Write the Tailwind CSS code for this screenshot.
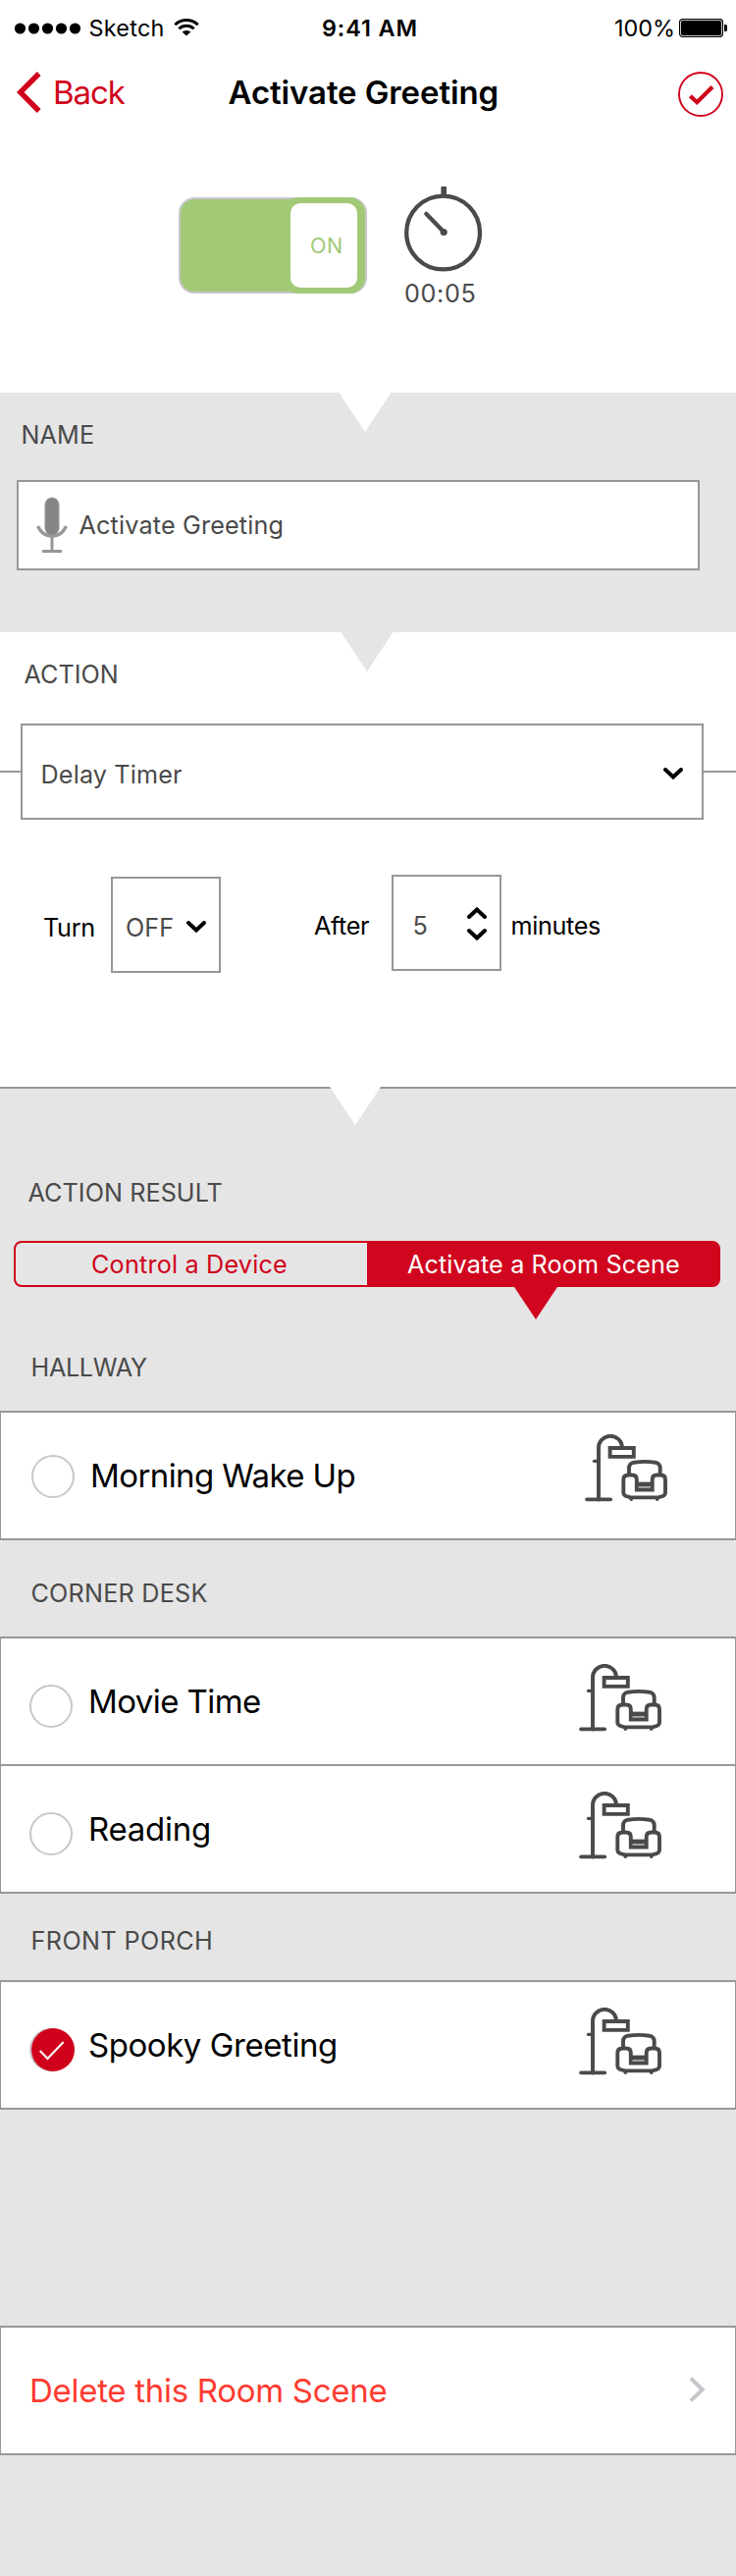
<!DOCTYPE html>
<html lang="en">
<head>
<meta charset="utf-8">
<title>Activate Greeting</title>
<script src="https://cdn.jsdelivr.net/npm/@tailwindcss/browser@4"></script>
</head>
<body class="w-[750px] h-[2624px] bg-white font-['Inter',sans-serif] text-black whitespace-nowrap overflow-x-hidden">

<svg class="hidden">
  <symbol id="lounge" viewBox="0 0 86 70">
    <g fill="none" stroke="#4a4a4a" stroke-width="3.9" stroke-linecap="round">
      <path d="M14 66.500V14A12 11.700 0 0 1 38 13"/>
      <path d="M25.600 14H49.800V22.900H25.600Z"/>
      <path d="M9.500 27.300H14" stroke-width="3.300"/>
      <path d="M2 66.300H26.200" stroke-width="3.700"/>
      <path stroke-linecap="butt" d="M45 42V34.500Q45 29.800 50 28.700Q61 27 71.700 28.700Q76.700 29.800 76.700 34.500V42"/>
      <path d="M52.800 56.500V46Q52.800 41.500 48 41.500H44.500Q39.300 41.500 39.300 46V59.500Q39.300 61.700 42 63L46.500 64.400H75L79.300 63Q82 61.700 82 59.500V46Q82 41.500 77 41.500H73.500Q68.700 41.500 68.700 46V56.500Z" stroke-linejoin="miter"/>
      <path d="M53 50.900H68.500" stroke-width="4.600" stroke-linecap="butt"/>
      <path d="M47.300 66V66.200M73.700 66V66.200" stroke-width="3.600"/>
    </g>
    <path d="M54.500 54H67" stroke="#8c8c8c" stroke-width="1.200"/>
  </symbol>
  <symbol id="down" viewBox="0 0 20 12">
    <path d="M2 2L10 9.500L18 2" fill="none" stroke="#000" stroke-width="4" stroke-linecap="round"/>
  </symbol>
</svg>

<!-- Status bar -->
<header>
  <div class="relative flex h-[57px] items-center text-[23.4px]">
    <svg class="ml-[14px] h-[12px] w-[70px]" viewBox="0 0 70 12"><circle cx="6.500" cy="6" r="5.600"/><circle cx="20.500" cy="6" r="5.600"/><circle cx="34.500" cy="6" r="5.600"/><circle cx="48.500" cy="6" r="5.600"/><circle cx="62.500" cy="6" r="5.600"/></svg>
    <span class="ml-[6.5px] w-[86px] tracking-[0.25px]">Sketch</span>
    <svg class="-mt-px h-[18px] w-[26px]" viewBox="0 0 26 18" fill="none" stroke="#000" stroke-width="2.900"><path d="M1.300 6.200A17 17 0 0 1 24.700 6.200"/><path d="M5.300 10.300A11.300 11.300 0 0 1 20.700 10.300"/><path d="M13 17.500L8.600 13.600A6.500 6.500 0 0 1 17.400 13.600Z" fill="#000" stroke="none"/></svg>
    <span class="ml-[125.500px] w-[298px] font-semibold tracking-[0.91px]">9:41 AM</span>
    <span>100%</span>
    <svg class="absolute left-[692px] top-[19px] h-[19px] w-[50px]" viewBox="0 0 50 19"><rect x=".6" y=".6" width="43.800" height="17.800" rx="2.800" fill="none" stroke="#000" stroke-width="1.200"/><rect x="2" y="2" width="41" height="15" rx="1.500"/><path d="M46 6h1.500q1.500 0 1.500 1.500v4q0 1.500-1.500 1.500H46z"/></svg>
  </div>
  <div class="flex h-[74px] items-center text-[33px]">
    <svg class="ml-[17px] h-[42px] w-[26px]" viewBox="0 0 26 42"><path d="M22.700 2L3.700 21L22.700 40" fill="none" stroke="#d0021b" stroke-width="5.400"/></svg>
    <span class="ml-[11px] w-[178.500px] pt-[2px] tracking-[-1.100px] text-[#d0021b]">Back</span>
    <h1 class="w-[458.500px] pt-[2px] font-semibold tracking-[-0.110px]">Activate Greeting</h1>
    <svg class="mt-[4px] h-[46px] w-[46px]" viewBox="0 0 46 46" fill="none" stroke="#d0021b"><circle cx="23" cy="23" r="22" stroke-width="1.900"/><path d="M12.400 24.800L19.200 31.200L35 15.500" stroke-width="4.200"/></svg>
  </div>
</header>

<!-- Switch and timer -->
<section class="flex h-[269px]">
  <div class="ml-[182px] mt-[70px] h-[98px] w-[192px] rounded-[16px] bg-[#c7c7cc]">
    <div class="relative h-full">
      <div class="absolute left-[2px] top-[2px] h-[94px] w-[188px] rounded-[14px] bg-[#a2c976]"></div>
      <div class="absolute right-[2px] top-0 flex h-[98px] w-[84px] items-center rounded-[16px] bg-[#a2c976] pl-[8px]">
        <div class="flex h-[86px] w-[68px] items-center rounded-[10px] bg-white pl-[20px] text-[21.500px] leading-[86px] tracking-[0.560px] text-[#a2c976]">ON</div>
      </div>
    </div>
  </div>
  <div class="ml-[38px] mt-[58px] text-[#4a4a4a]">
    <svg class="h-[90px] w-[80px]" viewBox="0 0 80 90" fill="none" stroke="#4a4a4a"><circle cx="39.600" cy="48" r="37.400" stroke-width="4.300"/><path d="M40.200 1V10" stroke-width="5.600"/><path d="M22.300 28.800L40 47" stroke-width="4.200" stroke-linecap="round"/><circle cx="40.200" cy="47.500" r="3.600" fill="#4a4a4a" stroke="none"/></svg>
    <div class="mt-[5px] text-[25.200px] leading-[30px] tracking-[0.640px]">00:05</div>
  </div>
</section>

<!-- Name -->
<section class="relative h-[244px] bg-[#e5e5e5] pt-[28px] text-[25.200px] text-[#4a4a4a]">
  <svg class="absolute left-[345px] top-0 h-[40px] w-[54px]" viewBox="0 0 54 40"><path d="M.5 0H53.500L27 40Z" fill="#fff"/></svg>
  <h2 class="pl-[21.500px] leading-[30px] tracking-[0.130px]">NAME</h2>
  <div class="ml-[17px] mt-[31px] flex h-[92px] w-[696px] items-center border-2 border-[#979797] bg-white">
    <svg class="ml-[18px] h-[58px] w-[32px]" viewBox="0 0 32 58"><rect x="9" y="1" width="14" height="38" rx="7" fill="#858585" stroke="#979797"/><path d="M1.500 30Q6 40 16 40.300Q26 40 30.500 30" fill="none" stroke="#979797" stroke-width="3.400"/><path d="M16 40V56M6 55.500H26" stroke="#979797" stroke-width="3"/></svg>
    <span class="ml-[11.500px] pt-[2px] tracking-[0.160px]">Activate Greeting</span>
  </div>
</section>

<!-- Action -->
<section class="relative h-[463px] pt-[28px] text-[25.200px]">
  <svg class="absolute left-[347px] top-0 h-[40px] w-[54px]" viewBox="0 0 54 40"><path d="M.5 0H53.500L27 40Z" fill="#e5e5e5"/></svg>
  <h2 class="pl-[24.500px] leading-[30px] text-[#4a4a4a]">ACTION</h2>
  <div class="mt-[35px] flex items-center text-[#4a4a4a]">
    <div class="h-[2px] w-[21px] bg-[#979797]"></div>
    <div class="flex h-[98px] w-[696px] items-center justify-between border-2 border-[#979797] pl-[18.500px] pr-[19px]">
      <span class="pt-[8px] tracking-[0.140px]">Delay Timer</span>
      <svg class="mt-[4px] h-[12px] w-[20px]"><use href="#down"/></svg>
    </div>
    <div class="h-[2px] flex-1 bg-[#979797]"></div>
  </div>
  <div class="mt-[56px] flex items-start">
    <span class="ml-[44px] mt-[2px] w-[69px] leading-[104px] tracking-[-0.300px]">Turn</span>
    <div class="mt-[2px] flex h-[98px] w-[112px] items-center border-2 border-[#979797]">
      <span class="ml-[13px] w-[62px] pt-[8px] text-[#4a4a4a]">OFF</span>
      <svg class="mt-[4px] h-[12px] w-[20px]"><use href="#down"/></svg>
    </div>
    <span class="ml-[95px] w-[79px] leading-[104px] tracking-[-0.380px]">After</span>
    <div class="flex h-[98px] w-[112px] items-center border-2 border-[#979797]">
      <span class="ml-[19.500px] w-[55.500px] pt-[8px] text-[#4a4a4a]">5</span>
      <div class="mt-[2px] flex flex-col gap-[10px]">
        <svg class="h-[12px] w-[20px] rotate-180"><use href="#down"/></svg>
        <svg class="h-[12px] w-[20px]"><use href="#down"/></svg>
      </div>
    </div>
    <span class="ml-[9.500px] leading-[104px] tracking-[-0.350px]">minutes</span>
  </div>
</section>

<!-- Action result -->
<section class="relative h-[1517px] border-t-2 border-[#979797] bg-[#e5e5e5] pt-[91px] text-[25.200px] text-[#4a4a4a]">
  <svg class="absolute -top-[2px] left-[335px] h-[40px] w-[54px]" viewBox="0 0 54 40"><path d="M1 0H53L27 39Z" fill="#fff"/></svg>
  <h2 class="pl-[28.500px] leading-[30px] tracking-[0.060px]">ACTION RESULT</h2>

  <div class="relative ml-[14px] mt-[34px] flex h-[47px] w-[720px] overflow-visible rounded-[8px] border-2 border-[#d0021b] leading-[44px]">
    <div class="w-[358px] pl-[77px] tracking-[0.190px] text-[#d0021b]">Control a Device</div>
    <div class="flex-1 rounded-r-[5px] bg-[#d0061f] pl-[41px] tracking-[0.120px] text-white">Activate a Room Scene</div>
    <svg class="absolute left-[508px] top-[44px] h-[34px] w-[44px]" viewBox="0 0 44 34"><path d="M0 0V1H0L22 34L44 1V0Z" fill="#d0061f"/></svg>
  </div>

  <h3 class="mt-[67px] pl-[31.500px] leading-[30px] tracking-[-0.330px]">HALLWAY</h3>
  <div class="mt-[29px] flex h-[132px] items-start border-x border-y-2 border-[#979797] bg-white text-[33px] text-black">
    <div class="ml-[31px] mt-[43px] h-[44px] w-[44px] rounded-full border-2 border-[#c7c7cc]"></div>
    <span class="ml-[16px] w-[504px] leading-[128px] tracking-[-0.600px]">Morning Wake Up</span>
    <svg class="mt-[22px] h-[70px] w-[86px]"><use href="#lounge"/></svg>
  </div>

  <h3 class="mt-[39px] pl-[31.500px] leading-[30px] tracking-[0.220px]">CORNER DESK</h3>
  <div class="mt-[29px] border-x border-y-2 border-[#979797] bg-white text-[33px] text-black">
    <div class="flex h-[128px] items-start">
      <div class="ml-[29px] mt-[47px] h-[44px] w-[44px] rounded-full border-2 border-[#c7c7cc]"></div>
      <span class="ml-[16px] w-[500px] leading-[128px] tracking-[-0.580px]">Movie Time</span>
      <svg class="mt-[26px] h-[70px] w-[86px]"><use href="#lounge"/></svg>
    </div>
    <div class="flex h-[130px] items-start border-t-2 border-[#979797]">
      <div class="ml-[29px] mt-[47px] h-[44px] w-[44px] rounded-full border-2 border-[#c7c7cc]"></div>
      <span class="ml-[16px] w-[500px] leading-[128px] tracking-[-0.260px]">Reading</span>
      <svg class="mt-[26px] h-[70px] w-[86px]"><use href="#lounge"/></svg>
    </div>
  </div>

  <h3 class="mt-[33px] pl-[31.500px] leading-[30px] tracking-[0.400px]">FRONT PORCH</h3>
  <div class="mt-[25px] flex h-[132px] items-start border-x border-y-2 border-[#979797] bg-white text-[33px] text-black">
    <svg class="ml-[29px] mt-[47px] h-[46px] w-[46px]" viewBox="0 0 46 46"><circle cx="22" cy="22" r="21" fill="none" stroke="#c7c7cc" stroke-width="2"/><circle cx="24" cy="22" r="22" fill="#d0021b"/><path d="M10.700 23L18.500 31L34.700 14" fill="none" stroke="#fff" stroke-width="2"/></svg>
    <span class="ml-[14px] w-[500px] leading-[128px] tracking-[-0.440px]">Spooky Greeting</span>
    <svg class="mt-[26px] h-[70px] w-[86px]"><use href="#lounge"/></svg>
  </div>

  <div class="mt-[220px] flex h-[132px] items-center justify-between border-x border-y-2 border-[#979797] bg-white pl-[29px] pr-[30px] text-[33px] text-[#ff3b30]">
    <span class="pt-[2px] tracking-[-0.290px]">Delete this Room Scene</span>
    <svg class="-mt-[3px] h-[26px] w-[17px]" viewBox="0 0 17 26"><path d="M1.800 1.500L13.800 13L1.800 24.500" fill="none" stroke="#c7c7cc" stroke-width="4"/></svg>
  </div>
</section>
</body>
</html>
